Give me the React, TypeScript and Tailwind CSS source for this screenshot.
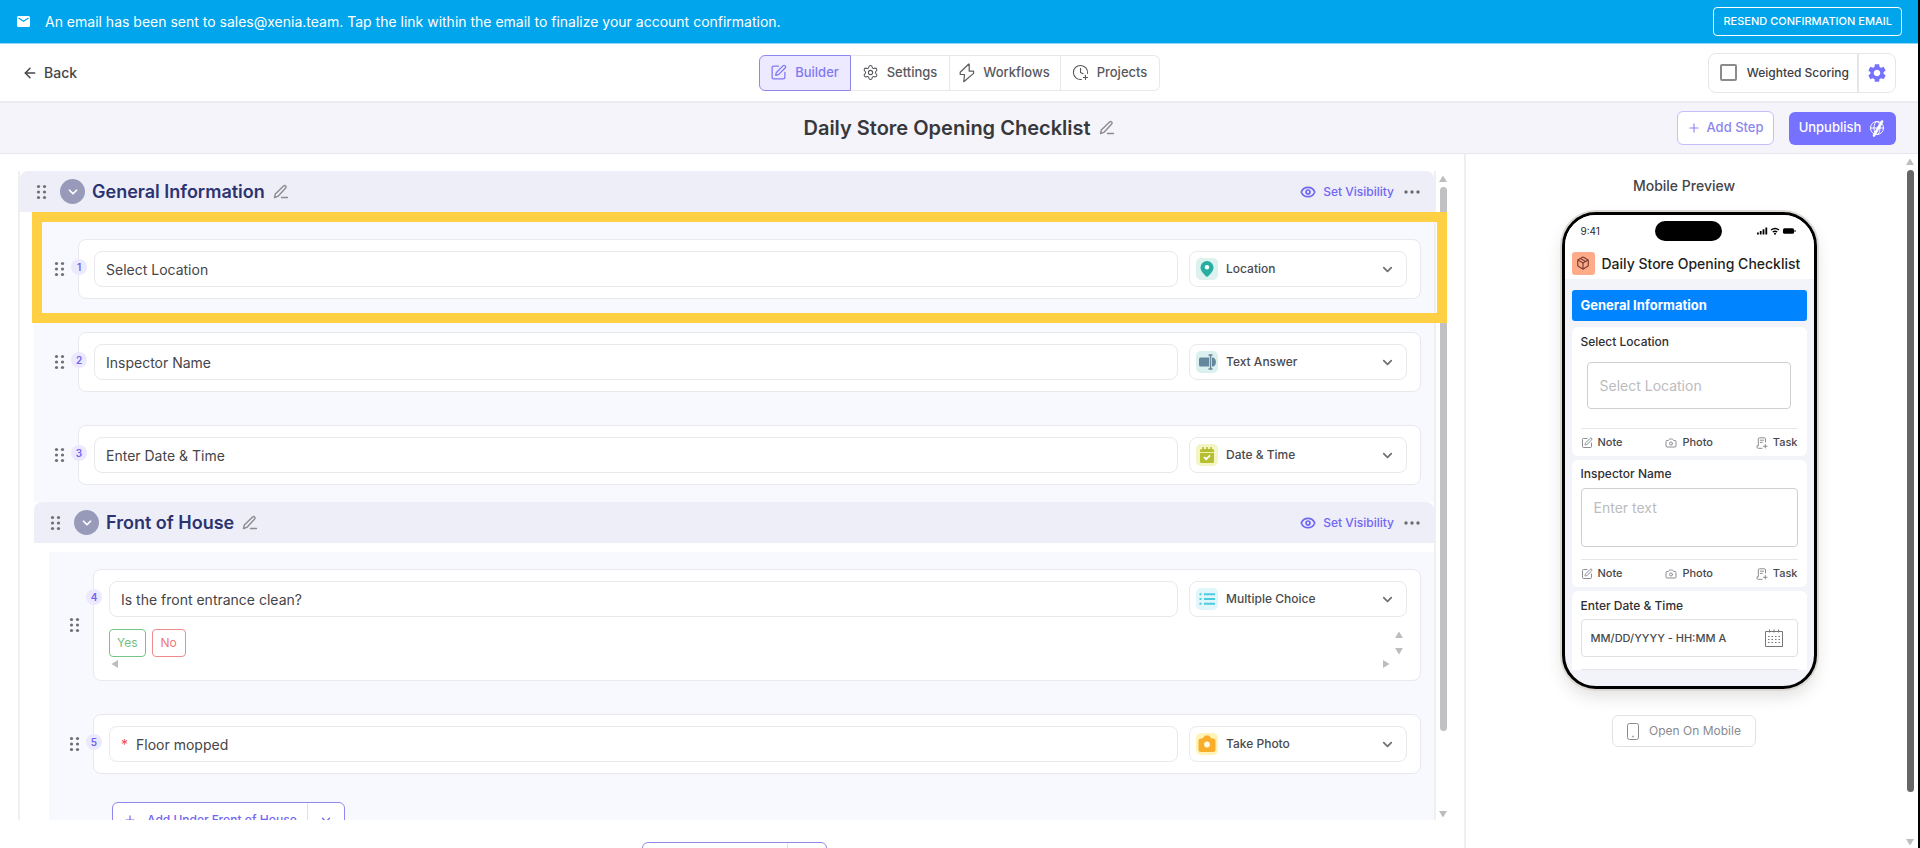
import type { ReactNode } from "react";
import {
  ArrowLeft,
  Camera,
  ChevronDown,
  ClockPlus,
  Eye,
  Package,
  Plus,
  Settings,
  SquarePen,
} from "lucide-react";
import { MdSettings } from "react-icons/md";

function DragDots() {
  return (
    <svg aria-hidden="true" width="12" height="16" viewBox="0 0 12 16" className="shrink-0 fill-[#6f6f73]">
      {[2.5, 8, 13.5].map((y) => (
        <g key={y}>
          <circle cx="2.5" cy={y} r="1.6" />
          <circle cx="8.5" cy={y} r="1.6" />
        </g>
      ))}
    </svg>
  );
}

function Pencil() {
  return (
    <svg
      aria-hidden="true"
      width="16"
      height="16"
      viewBox="0 0 16 16"
      fill="none"
      stroke="#8b8b90"
      strokeWidth="1.4"
      strokeLinecap="round"
      strokeLinejoin="round"
    >
      <path d="M1.500 13.500l.8-3.400L10.600 1.900a1.300 1.300 0 0 1 1.900 0l.2.2a1.300 1.300 0 0 1 0 1.900L4.800 12.400z" />
      <path d="M8.500 13.500h6" />
    </svg>
  );
}

function Triangle({ dir }: { dir: "up" | "down" | "left" | "right" }) {
  const points = {
    up: "4,0.500 8,7 0,7",
    down: "0,1 8,1 4,7.500",
    left: "7,0 7,8 0.500,4",
    right: "1,0 7.500,4 1,8",
  };
  return (
    <svg aria-hidden="true" width="8" height="8" viewBox="0 0 8 8" className="shrink-0 fill-[#bdbdbd]">
      <polygon points={points[dir]} />
    </svg>
  );
}

function BoltIcon() {
  return (
    <svg aria-hidden="true" width="16" height="20" viewBox="0 0 16 20" fill="none" stroke="#5c5c60" strokeWidth="1.200" strokeLinejoin="round">
      <path d="M9.500 1.200L1.200 9.300v2.200h4.300l-.7 7.200L14.600 10.400V8.200H10.200V1.200z" />
    </svg>
  );
}

function GlobeSlash() {
  return (
    <svg aria-hidden="true" width="17" height="18" viewBox="0 0 17 18" fill="none" stroke="#fff" strokeWidth="1">
      <circle cx="8" cy="9" r="6.500" />
      <ellipse cx="8" cy="9" rx="3" ry="6.500" />
      <path d="M1.500 9h13" />
      <path d="M13 2.500L5 16.500" strokeWidth="2.600" strokeLinecap="round" />
    </svg>
  );
}

function TaskIcon() {
  return (
    <svg aria-hidden="true" width="12" height="12" viewBox="0 0 12 12" fill="none" stroke="#8d8d92" strokeLinecap="round">
      <path d="M9.500 5V2A1.200 1.200 0 0 0 8.300.8H3.500A1.200 1.200 0 0 0 2.300 2v6.800H1v1.200a1.300 1.300 0 0 0 1.300 1.300H6" />
      <path d="M4.300 3.200h3.200M4.300 5.400h2M9.300 7.500v3.500M7.500 9.300h3.600" />
    </svg>
  );
}

function CalendarIcon() {
  return (
    <svg aria-hidden="true" width="18" height="18" viewBox="0 0 18 18" fill="none" stroke="#77777b">
      <path d="M.5 2.500h17v15H.5z" />
      <path d="M4.500.5v3M9 .5v3M13.500.5v3" />
      <path d="M3 7.500h12M3 10.500h12M3 13.500h12" strokeDasharray="1.500 2" />
    </svg>
  );
}

type Kind = "location" | "text" | "date" | "choice" | "photo";

function KindIcon({ kind }: { kind: Kind }) {
  const shapes: Record<Kind, { bg: string; art: ReactNode }> = {
    location: {
      bg: "#ddf1ef",
      art: (
        <>
          <path d="M11 3a6.500 6.500 0 0 0-6.500 6.500C4.500 14 11 19 11 19s6.500-5 6.500-9.500A6.500 6.500 0 0 0 11 3z" fill="#26aea0" />
          <circle cx="11" cy="9.300" r="2.200" fill="#fff" />
        </>
      ),
    },
    text: {
      bg: "#dcf0f0",
      art: (
        <>
          <path d="M4.500 6.500H13v9H4.500A1.500 1.500 0 0 1 3 14V8a1.500 1.500 0 0 1 1.500-1.500z" fill="#64879b" />
          <path d="M16 6.500h1.500Q20 8 20 11t-2.500 4.500H16z" fill="#64879b" />
          <path d="M12.500 4h4M14.500 4v14M12.500 18h4" stroke="#64879b" strokeWidth="1.500" />
        </>
      ),
    },
    date: {
      bg: "#f3f5c4",
      art: (
        <>
          <path d="M5.500 5h11A1.500 1.500 0 0 1 18 6.500v11a1.500 1.500 0 0 1-1.500 1.500h-11A1.500 1.500 0 0 1 4 17.500v-11A1.500 1.500 0 0 1 5.500 5z" fill="#b5bf31" />
          <path d="M7 3v3M11 3v3M15 3v3" stroke="#b5bf31" strokeWidth="1.600" />
          <path d="M4 8.500h14" stroke="#eef0b4" />
          <path d="M8 13l2.200 2.200 3.800-3.800" stroke="#fff" strokeWidth="1.700" fill="none" />
        </>
      ),
    },
    choice: {
      bg: "#e0f6fa",
      art: (
        <path
          d="M3.500 6.300h2M3.500 11h2M3.500 15.700h2M8 6.300h11M8 11h11M8 15.700h11"
          stroke="#4ccbe0"
          strokeWidth="2"
        />
      ),
    },
    photo: {
      bg: "#fff3b8",
      art: (
        <>
          <path d="M5 5.500h1.500L9 2.500h4l2.500 3H17a2.500 2.500 0 0 1 2.500 2.500v8.500A2.500 2.500 0 0 1 17 19H5a2.500 2.500 0 0 1-2.500-2.500V8A2.500 2.500 0 0 1 5 5.500z" fill="#f9ae2b" />
          <circle cx="11" cy="11.500" r="2.900" fill="#fffbe0" />
        </>
      ),
    },
  };
  const { bg, art } = shapes[kind];
  return (
    <svg aria-hidden="true" width="22" height="22" viewBox="0 0 22 22">
      <rect width="22" height="22" rx="5" fill={bg} />
      {art}
    </svg>
  );
}

interface QuestionProps {
  n: number;
  title: string;
  kind: Kind;
  type: string;
  required?: boolean;
  children?: ReactNode;
}

function Question({ n, title, kind, type, required, children }: QuestionProps) {
  return (
    <li className="flex items-center pr-[13px] pl-5">
      <DragDots />
      <div className="relative ml-3 flex-1 rounded-lg border border-[#e9e9ed] bg-white py-[11px] pr-[13px] pl-[15px]">
        <span className="absolute top-[19px] -left-2 flex size-4 items-center justify-center rounded-full bg-[#ece9ff] text-[10px] font-semibold text-[#6f63f0]">
          {n}
        </span>
        <div className="flex gap-[11px]">
          <div className="flex h-9 flex-1 items-center gap-2 rounded-lg border border-[#e9e9ec] px-[11px]">
            {required && <span className="text-[14px] text-[#f0504c]">*</span>}
            <input
              aria-label={"Question " + n}
              defaultValue={title}
              className="h-full w-full bg-transparent text-[14px] text-[#454548] outline-none"
            />
          </div>
          <div className="grid w-[218px] items-center">
            <select
              aria-label={"Answer type " + n}
              className="col-start-1 row-start-1 h-9 appearance-none rounded-lg border border-[#e9e9ec] bg-transparent pl-9 text-[12px] font-medium text-[#4a4a4d] outline-none"
            >
              <option>{type}</option>
            </select>
            <span className="pointer-events-none col-start-1 row-start-1 flex items-center justify-between pr-3 pl-[7px]">
              <KindIcon kind={kind} />
              <ChevronDown aria-hidden="true" size={15} strokeWidth={2.800} className="text-[#707074]" />
            </span>
          </div>
        </div>
        {children}
      </div>
    </li>
  );
}

function SectionHeader({ title }: { title: string }) {
  return (
    <div className="flex h-[41px] items-center rounded-t-lg bg-[#eeeef8] pr-3.5 pl-4">
      <DragDots />
      <button type="button" aria-label={"Collapse " + title} className="ml-3 flex size-[25px] items-center justify-center rounded-full bg-[#979bb9] text-white">
        <ChevronDown size={14} strokeWidth={3} />
      </button>
      <h2 className="ml-[7px] text-[18px] font-semibold text-[#2b3470]">{title}</h2>
      <button type="button" aria-label={"Rename " + title} className="ml-2">
        <Pencil />
      </button>
      <button type="button" className="ml-auto flex items-center gap-[7px] text-[12px] font-medium text-[#7067f2]">
        <Eye size={16} strokeWidth={2.600} />
        Set Visibility
      </button>
      <button type="button" aria-label="More options" className="ml-2.5">
        <svg width="16" height="4" viewBox="0 0 16 4" className="fill-[#6c6c70]">
          <circle cx="2" cy="2" r="1.700" />
          <circle cx="8" cy="2" r="1.700" />
          <circle cx="14" cy="2" r="1.700" />
        </svg>
      </button>
    </div>
  );
}

function PreviewActions() {
  return (
    <div className="flex h-7 items-center justify-between border-t border-[#e6e6ea] text-[11px] font-medium text-[#48484c]">
      <span className="flex items-center gap-[5px]">
        <SquarePen size={12} className="text-[#8d8d92]" />
        Note
      </span>
      <span className="flex items-center gap-[5px]">
        <Camera size={12} className="text-[#8d8d92]" />
        Photo
      </span>
      <span className="flex items-center gap-[5px]">
        <TaskIcon />
        Task
      </span>
    </div>
  );
}

function Phone() {
  return (
    <div className="w-[255px] overflow-hidden rounded-[34px] border-3 border-black bg-[#f2f4f9] shadow-[0_0_0_2px_#dcd8d4,0_8px_16px_rgba(60,50,40,0.14)]">
      <div className="grid h-8 grid-cols-[1fr_auto_1fr] items-center bg-white pr-[18px] pl-4 text-[10px] text-[#2b2b2e]">
        <span>9:41</span>
        <span className="h-5 w-[67px] rounded-full bg-black" />
        <svg aria-hidden="true" width="40" height="10" viewBox="0 0 40 10" className="justify-self-end fill-black">
          <rect x="1" y="6.500" width="1.800" height="2" />
          <rect x="3.800" y="5" width="1.800" height="3.500" />
          <rect x="6.600" y="3.300" width="1.800" height="5.200" />
          <rect x="9.400" y="1.500" width="1.800" height="7" />
          <path d="M15 4a6.500 6.500 0 0 1 8 0M16.700 6a4 4 0 0 1 4.600 0" fill="none" stroke="#000" strokeWidth="1.400" />
          <circle cx="19" cy="7.700" r="1" />
          <rect x="27" y="2.300" width="11" height="5.500" rx="1.500" />
          <rect x="38.500" y="4" width="1" height="2" />
        </svg>
      </div>
      <div className="flex h-8 items-center gap-[7px] bg-white pl-[7px]">
        <span className="flex h-[23px] w-[23px] items-center justify-center rounded-[3px] bg-[#ffab8a] text-[#7a3b33]">
          <Package size={14} strokeWidth={2} />
        </span>
        <span className="text-[14px] font-medium text-[#1f1f22]">Daily Store Opening Checklist</span>
      </div>
      <div className="flex flex-col px-[7px] pt-[11px] pb-4">
        <div className="h-[31px] rounded-[3px] bg-[#0084ff] pl-[9px] text-[13px] leading-[31px] font-bold text-white">
          General Information
        </div>
        <div className="mt-1.5 rounded-md bg-white px-[9px] pt-1.5">
          <label htmlFor="pv-location" className="block text-[12px] leading-[18px] font-medium text-[#2f2f33]">
            Select Location
          </label>
          <input
            id="pv-location"
            placeholder="Select Location"
            className="mx-1.5 mt-[11px] mb-[19px] block h-[47px] w-[204px] rounded border border-[#cfcfd3] px-3 text-[14px] outline-none placeholder:text-[#bcbcc0]"
          />
          <PreviewActions />
        </div>
        <div className="mt-1 rounded-md bg-white px-[9px] pt-[5px]">
          <label htmlFor="pv-name" className="block text-[12px] leading-[18px] font-medium text-[#2f2f33]">
            Inspector Name
          </label>
          <textarea
            id="pv-name"
            placeholder="Enter text"
            className="mt-[5px] mb-3 block h-[59px] w-full resize-none rounded border border-[#cfcfd3] px-3 py-2 text-[14px] outline-none placeholder:text-[#bcbcc0]"
          />
          <PreviewActions />
        </div>
        <div className="mt-1 rounded-t-md bg-white px-[9px] pt-1.5">
          <label htmlFor="pv-date" className="block text-[12px] leading-[18px] font-medium text-[#2f2f33]">
            Enter Date &amp; Time
          </label>
          <div className="mt-1 flex h-[38px] items-center rounded border border-[#e0e0e4] pr-3.5 pl-[9px]">
            <input id="pv-date" defaultValue="MM/DD/YYYY - HH:MM A" className="w-full min-w-0 flex-1 text-[11px] font-medium text-[#4a4a4e] outline-none" />
            <CalendarIcon />
          </div>
          <div className="mt-3 h-px bg-[#e6e6ea]" />
        </div>
      </div>
    </div>
  );
}

export default function App() {
  return (
    <div className="flex h-screen flex-col overflow-hidden border-r-2 border-black bg-white font-['Inter','Liberation_Sans',sans-serif] text-[#3c3c3f]">
      <div className="flex h-11 shrink-0 items-center border-b border-[#8fd6f7] bg-[#00a5eb] pr-4 pl-[17px] text-white">
        <svg aria-hidden="true" width="13" height="11" viewBox="0 0 13 11">
          <rect width="13" height="11" rx="1.500" fill="#fff" />
          <path d="M1.500 2l5 3.300 5-3.300" fill="none" stroke="#00a5eb" strokeWidth="1.200" />
        </svg>
        <p className="ml-[15px] text-[14px]">
          An email has been sent to sales@xenia.team. Tap the link within the email to finalize your account confirmation.
        </p>
        <button type="button" className="ml-auto h-[29px] rounded border border-white px-[9px] text-[11px] font-medium">
          RESEND CONFIRMATION EMAIL
        </button>
      </div>

      <header className="grid h-[59px] shrink-0 grid-cols-[1fr_auto_1fr] items-center border-b-2 border-[#ececee] px-[22px]">
        <a href="#back" className="flex items-center gap-1.5 justify-self-start text-[14px] font-medium text-[#454548]">
          <ArrowLeft size={16} strokeWidth={2.200} />
          Back
        </a>
        <nav className="flex h-9 text-[13px] font-medium text-[#58585c]">
          <button type="button" className="flex w-[92px] items-center justify-center gap-2 rounded-l-md border border-[#8f88ee] bg-[#edeaff] text-[#8178f3]">
            <SquarePen size={17} strokeWidth={1.800} />
            Builder
          </button>
          <button type="button" className="flex w-[99px] items-center justify-center gap-2 border-y border-r border-[#e8e8eb]">
            <Settings size={17} strokeWidth={1.500} />
            Settings
          </button>
          <button type="button" className="flex w-[111px] items-center justify-center gap-2 border-y border-r border-[#e8e8eb]">
            <BoltIcon />
            Workflows
          </button>
          <button type="button" className="flex w-[99px] items-center justify-center gap-2 rounded-r-md border-y border-r border-[#e8e8eb]">
            <ClockPlus size={17} strokeWidth={1.500} />
            Projects
          </button>
        </nav>
        <div className="flex h-10 items-center justify-self-end rounded-lg border border-[#e6e6e9]">
          <label className="flex h-full items-center gap-2.5 border-r-2 border-[#e6e6e9] pr-2 pl-[11px] text-[12px] font-medium">
            <input type="checkbox" className="size-[17px] appearance-none rounded-[2px] border-2 border-[#8b8b8e]" />
            Weighted Scoring
          </label>
          <button type="button" aria-label="Scoring settings" className="flex w-9 items-center justify-center text-[#7671ff]">
            <MdSettings size={22} />
          </button>
        </div>
      </header>

      <div className="grid h-[51px] shrink-0 grid-cols-[1fr_auto_1fr] items-center border-b border-[#e8e8ec] bg-[#f4f4fa] px-[22px]">
        <h1 className="col-start-2 flex items-center gap-2 text-[20px] font-semibold text-[#38383c]">
          Daily Store Opening Checklist
          <button type="button" aria-label="Rename checklist">
            <Pencil />
          </button>
        </h1>
        <div className="flex items-center gap-[15px] justify-self-end text-[13px] font-medium">
          <button type="button" className="flex h-[34px] w-[97px] items-center justify-center gap-[5px] rounded-md border border-[#c3bff8] bg-white text-[#8d86f0]">
            <Plus size={14} strokeWidth={2} />
            Add Step
          </button>
          <button type="button" className="flex h-[33px] w-[107px] items-center justify-center gap-2 rounded-md bg-[#7671ff] text-white">
            Unpublish
            <GlobeSlash />
          </button>
        </div>
      </div>

      <div className="flex min-h-0 flex-1">
        <main className="relative flex min-w-0 flex-1 flex-col pt-[17px]">
          <div className="flex min-h-0 flex-1 pr-3.5 pl-[18px]">
            <div className="min-w-0 flex-1 overflow-hidden border-x-2 border-[#efeff1]">
              <SectionHeader title="General Information" />
              <ol className="ml-3.5 flex flex-col gap-[33px] bg-[#f8f9ff] pt-[27px] pb-[17px]">
                <Question n={1} title="Select Location" kind="location" type="Location" />
                <Question n={2} title="Inspector Name" kind="text" type="Text Answer" />
                <Question n={3} title="Enter Date & Time" kind="date" type="Date & Time" />
              </ol>
              <div className="ml-3.5">
                <SectionHeader title="Front of House" />
                <div className="mt-[9px] ml-[15px] bg-[#f8f9ff] pt-[17px]">
                  <ol start={4} className="flex flex-col gap-[33px]">
                    <Question n={4} title="Is the front entrance clean?" kind="choice" type="Multiple Choice">
                      <div className="mt-3 flex items-start justify-between pr-1">
                        <div className="flex gap-1.5 text-[12px]">
                          <span className="flex h-7 items-center rounded border border-[#71c783] px-[7px] text-[#78bd80]">Yes</span>
                          <span className="flex h-7 items-center rounded border border-[#ef8c8c] px-2 text-[#ee7b7b]">No</span>
                        </div>
                        <div className="flex flex-col gap-2 pt-0.5">
                          <Triangle dir="up" />
                          <Triangle dir="down" />
                        </div>
                      </div>
                      <div className="mt-0.5 flex h-2.5 items-center justify-between pr-[17px] pl-0.5">
                        <Triangle dir="left" />
                        <Triangle dir="right" />
                      </div>
                    </Question>
                    <Question n={5} title="Floor mopped" kind="photo" type="Take Photo" required />
                  </ol>
                  <div className="mt-7 flex items-center">
                    <span className="h-px w-[54px] bg-[#dfe0ea]" />
                    <div className="ml-[9px] flex h-9 rounded-md border border-[#8f88ee] bg-white text-[12px] font-medium text-[#7067f2]">
                      <button type="button" className="flex items-center gap-2.5 border-r border-[#e0dff5] px-2.5">
                        <Plus size={14} strokeWidth={2} />
                        Add Under Front of House
                      </button>
                      <button type="button" aria-label="More add options" className="flex w-9 items-center justify-center">
                        <ChevronDown size={14} strokeWidth={2.200} />
                      </button>
                    </div>
                  </div>
                </div>
              </div>
            </div>
            <div aria-hidden="true" className="flex w-3.5 flex-col items-center pt-1 pb-0.5">
              <Triangle dir="up" />
              <div className="mt-1 mb-[79px] w-[7px] flex-1 rounded-full bg-[#c1c1c3]" />
              <Triangle dir="down" />
            </div>
          </div>
          <div className="flex h-7 shrink-0 justify-center overflow-hidden pt-[22px] pl-1">
            <div className="flex h-9 w-[185px] rounded-md border border-[#8f88ee] bg-white">
              <button type="button" aria-label="Add section" className="flex-1 border-r border-[#e0dff5]" />
              <button type="button" aria-label="More section options" className="w-[38px]" />
            </div>
          </div>
          <div className="pointer-events-none absolute top-[58px] right-[17px] left-8 h-[111px] border-10 border-[#ffd043]" />
        </main>

        <aside className="flex w-[454px] shrink-0 border-l-2 border-[#efeff1]">
          <div className="flex flex-1 flex-col items-center pt-[22px]">
            <h2 className="text-[14px] leading-5 font-medium text-[#454548]">Mobile Preview</h2>
            <div className="mt-4 ml-2.5">
              <Phone />
            </div>
            <button type="button" className="mt-[26px] flex h-8 items-center gap-2.5 rounded-md border border-[#e2e2e5] px-3.5 text-[12px] text-[#8a8a8e]">
              <svg aria-hidden="true" width="12" height="17" viewBox="0 0 12 17" fill="none" stroke="#8a8a8e">
                <rect x=".5" y=".5" width="11" height="16" rx="2" />
                <path d="M5.300 13.500h1.400" strokeWidth="1.300" />
              </svg>
              Open On Mobile
            </button>
          </div>
          <div aria-hidden="true" className="flex w-4 flex-col items-center pt-1 pb-0.5">
            <Triangle dir="up" />
            <div className="mt-1 mb-[46px] w-[7px] flex-1 rounded-full bg-[#666668]" />
            <Triangle dir="down" />
          </div>
        </aside>
      </div>
    </div>
  );
}
